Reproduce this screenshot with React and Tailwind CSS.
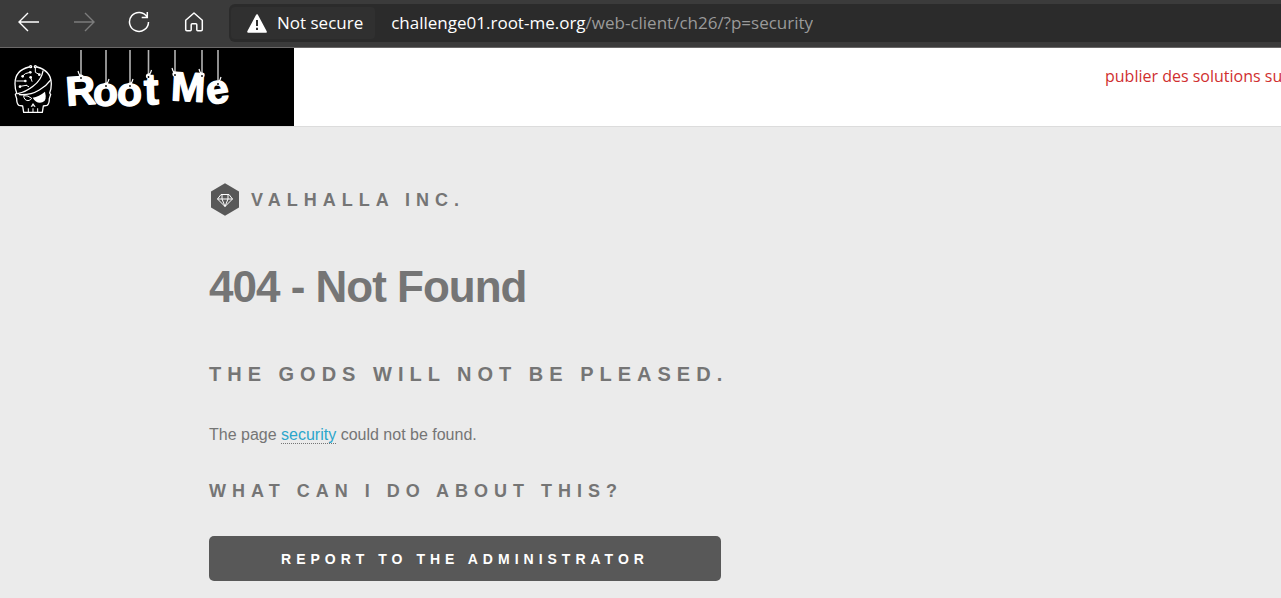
import React from "react";

function BackIcon() {
  return (
    <svg width="22" height="20" viewBox="0 0 22 20" fill="none" stroke="currentColor" strokeWidth="1.4">
      <path d="M21 10H1M10 1L1 10l9 9" />
    </svg>
  );
}

function ForwardIcon() {
  return (
    <svg width="22" height="20" viewBox="0 0 22 20" fill="none" stroke="currentColor" strokeWidth="1.4">
      <path d="M1 10h20M12 1l9 9-9 9" />
    </svg>
  );
}

function ReloadIcon() {
  return (
    <svg width="22" height="22" viewBox="0 0 22 22" fill="none" stroke="currentColor" strokeWidth="1.5">
      <path d="M19.2 6.1A9.5 9.5 0 1 0 20.5 11M19.3 1v5.4h-5.6" />
    </svg>
  );
}

function HomeIcon() {
  return (
    <svg width="20" height="20" viewBox="0 0 20 20" fill="none" stroke="currentColor" strokeWidth="1.5" strokeLinejoin="round">
      <path d="M10 1L1.7 8.2v9.3q0 1.2 1.2 1.2h3.4q.9 0 .9-.9v-5q0-1 1-1h3.6q1 0 1 1v5q0 .9.9.9h3.4q1.2 0 1.2-1.2V8.2z" />
    </svg>
  );
}

function WarningIcon() {
  return (
    <svg width="20" height="19" viewBox="0 0 20 19" aria-hidden="true">
      <path d="M10 1.2L18.8 17.8H1.2z" fill="#fff" stroke="#fff" strokeWidth="2" strokeLinejoin="round" />
      <path d="M10 6v6M10 13.8v2.2" stroke="#303030" strokeWidth="2" />
    </svg>
  );
}

const letters = [
  { ch: "R", x: 66, y: 57, size: 41, turn: -4 },
  { ch: "o", x: 93, y: 58, size: 41, turn: 0 },
  { ch: "o", x: 117, y: 58, size: 41, turn: 0 },
  { ch: "t", x: 144, y: 56, size: 44, turn: -2 },
  { ch: "M", x: 171, y: 53, size: 41, turn: 3 },
  { ch: "e", x: 206, y: 55, size: 41, turn: -9 },
];

const strings = [
  { x: 81, y: 28, side: -1 },
  { x: 106, y: 36, side: 1 },
  { x: 130, y: 36, side: 1 },
  { x: 148.5, y: 27, side: 1 },
  { x: 175, y: 25, side: -1 },
  { x: 202, y: 26, side: -1 },
  { x: 218, y: 34, side: 1 },
];

function Logo() {
  return (
    <svg width="294" height="78" viewBox="0 0 294 78" role="img" aria-label="Root Me">
      <g transform="scale(.3333) translate(0 -9)" fill="none" stroke="#fff" strokeWidth="4" strokeLinejoin="round" strokeLinecap="round">
        <path d="M87 66Q45 76 45 116Q45 132 50 144L46 149L50 161Q50 177 57 181L68 183L71 202H127L130 183L141 181Q148 177 148 161L152 149L149 144Q154 132 154 116Q153 77 111 66" />
        <path d="M53 146Q78 141 99 124Q125 104 129 78M58 149Q92 151 118 135Q138 124 151 106" />
        <circle cx="92" cy="65" r="3" />
        <circle cx="106" cy="65" r="3" />
        <path d="M50 108H75M61 124L79 121M68 93L76 86L90 82M92 97L96 109M106 68V82L117 88M79 121L86 125" strokeWidth="3" />
        <g fill="#fff" stroke="none">
          <circle cx="76" cy="108" r="4" />
          <circle cx="60" cy="125" r="4" />
          <circle cx="68" cy="94" r="4" />
          <circle cx="91" cy="82" r="4" />
          <circle cx="92" cy="97" r="4" />
          <circle cx="118" cy="89" r="4" />
          <path d="M98 158Q117 155 135 140Q142 168 127 172Q109 177 98 158z" />
          <path d="M99 174L92 185H97L99 181L102 185H107z" />
        </g>
        <path d="M71 153Q72 166 84 167Q92 166 95 160L85 154zM85 191V202M99 191V202M113 191V202" strokeWidth="3" />
      </g>
      <g fill="#fff" stroke="#fff" strokeWidth="1.4" strokeLinejoin="round" fontFamily="'Liberation Sans', Arial, sans-serif" fontWeight="700">
        {letters.map((l, i) => (
          <text key={i} x={l.x} y={l.y} fontSize={l.size} transform={`rotate(${l.turn} ${l.x + 12} ${l.y - 12})`}>
            {l.ch}
          </text>
        ))}
      </g>
      {strings.map(({ x, y, side }) => (
        <g key={x}>
          <path d={`M${x} 2V${y}`} stroke="#b4b4b4" strokeWidth="1.6" />
          <path d={`M${x + side * 3} ${y - 5}l${-side} 3l${-side * 2} 2`} fill="none" stroke="#fff" strokeWidth="1.2" />
          <circle cx={x} cy={y + 1} r="2.6" fill="#fff" />
          <circle cx={x} cy={y + 2} r=".9" fill="#000" />
        </g>
      ))}
    </svg>
  );
}

function GemBadge() {
  return (
    <svg width="30" height="34" viewBox="0 0 30 34" aria-hidden="true">
      <path d="M16 .2L30 8.5v16L16 32.8 2 24.5V8.5z" fill="#585858" />
      <path d="M12 11.500h8l3.500 4.500L16 23.500 8.500 16zM8.500 16h15M13 11.500V16l3 7.500 3-7.500v-4.500" fill="none" stroke="#fff" strokeWidth="1" strokeLinejoin="round" />
    </svg>
  );
}

function BrowserBar() {
  return (
    <div className="flex h-12 items-start overflow-hidden border-b border-[#6a6868] bg-[#3b3b3b] font-['Open_Sans',sans-serif] text-white">
      <nav aria-label="Browser" className="flex h-11 shrink-0 items-center gap-8 pl-[17px]">
        <button aria-label="Back" className="flex w-[23px] justify-center"><BackIcon /></button>
        <button aria-label="Forward" className="flex w-[23px] justify-center text-[#7c7c7c]"><ForwardIcon /></button>
        <button aria-label="Reload" className="flex w-[23px] justify-center"><ReloadIcon /></button>
        <button aria-label="Home" className="flex w-[23px] justify-center"><HomeIcon /></button>
      </nav>
      <div className="mt-1 ml-6 flex h-[38px] min-w-0 flex-1 items-center rounded-l-md bg-[#2b2b2b] pl-[2px]">
        <button className="flex h-8 shrink-0 items-center gap-[10px] rounded bg-[#303030] pr-3 pl-4 text-[17px] leading-6">
          <WarningIcon />
          Not secure
        </button>
        <a href="#address" className="ml-4 truncate text-[17px] leading-6 text-[#9a9a9a]">
          <span className="text-white">challenge01.root-me.org</span>/web-client/ch26/?p=security
        </a>
      </div>
    </div>
  );
}

export default function App() {
  return (
    <div className="min-h-screen overflow-hidden bg-[#ebebeb] font-['Liberation_Sans',Arial,sans-serif] text-[#757575]">
      <BrowserBar />
      <header className="flex justify-between border-b border-[#dcdcdc] bg-white">
        <a href="#home" className="shrink-0 bg-black"><Logo /></a>
        <div className="w-44 overflow-hidden pt-4 whitespace-nowrap">
          <a href="#solutions" className="font-['Open_Sans',sans-serif] text-[16px] leading-6 text-[#d02f2f]">
            publier des solutions su
          </a>
        </div>
      </header>
      <main className="ml-[209px] w-[512px] pt-14">
        <div className="flex items-center gap-3">
          <GemBadge />
          <span className="text-[18px] leading-6 font-bold tracking-[6px] whitespace-nowrap">VALHALLA INC.</span>
        </div>
        <h1 className="mt-11 text-[44px] leading-[52px] font-bold tracking-[-1px] whitespace-nowrap">404 - Not Found</h1>
        <h2 className="mt-[49px] text-[20px] leading-6 font-bold tracking-[6px] whitespace-nowrap">
          THE GODS WILL NOT BE PLEASED.
        </h2>
        <p className="mt-[37px] text-[16px] leading-6">
          The page{" "}
          <a href="#security" className="border-b border-dotted border-[#757575] text-[#2ba6cb]">security</a>
          {" "}could not be found.
        </p>
        <h3 className="mt-8 text-[18px] leading-6 font-bold tracking-[6px] whitespace-nowrap">
          WHAT CAN I DO ABOUT THIS?
        </h3>
        <button className="mt-[33px] h-[45px] w-full rounded-[5px] bg-[#585858] text-[14px] leading-6 font-bold tracking-[5px] text-white">
          REPORT TO THE ADMINISTRATOR
        </button>
      </main>
    </div>
  );
}
